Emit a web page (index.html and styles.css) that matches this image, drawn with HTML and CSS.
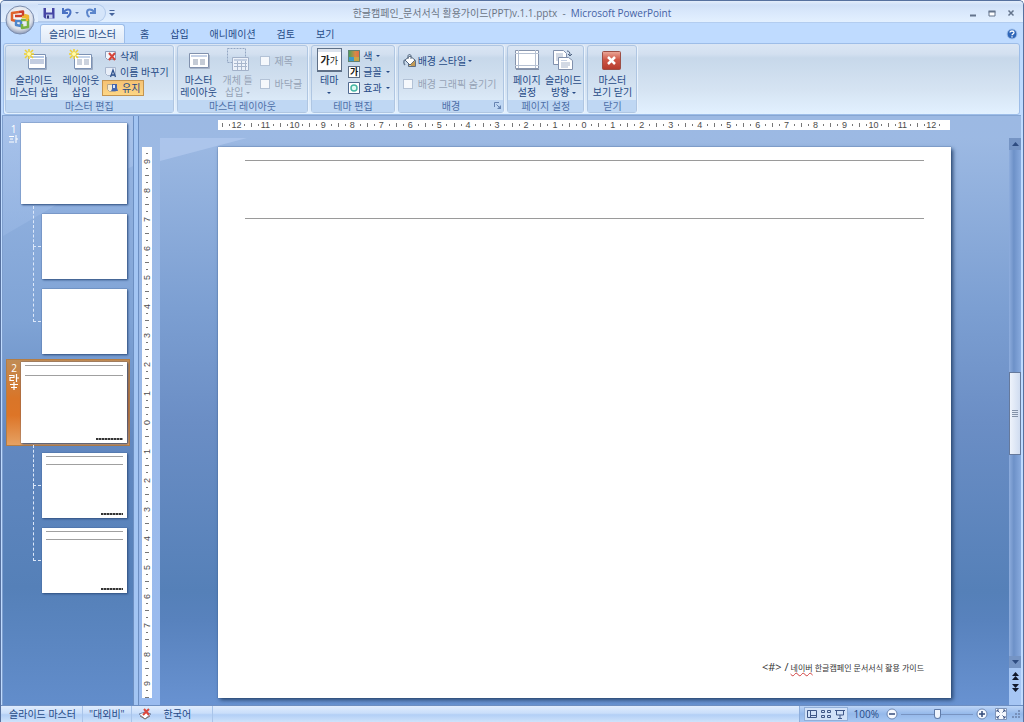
FILE: index.html
```html
<!DOCTYPE html>
<html lang="ko">
<head>
<meta charset="utf-8">
<title>한글캠페인_문서서식 활용가이드(PPT)v.1.1.pptx - Microsoft PowerPoint</title>
<link rel="stylesheet" href="styles.css">
</head>
<body>
<div class="window">
  <header class="titlebar">
    <div class="quick">
      <button aria-label="저장"><svg width="12" height="12" viewBox="0 0 12 12"><path d="M0.500 1h11v10.500H2L.5 10z" fill="#4545a5"/><path d="M3 1h6v4.500H3z" fill="#dfe8fa"/><path d="M3 7.500h6.500v4H3z" fill="#c2cfee"/><path d="M4 8.500h2v3H4z" fill="#333a80"/></svg></button>
      <button aria-label="실행 취소"><svg width="18" height="12" viewBox="0 0 18 12"><path d="M2 1v5h5M2.500 5.500C5 1.500 9.500 1.500 9.500 5c0 2.500-1.500 4-3.500 5.500" fill="none" stroke="#4a72c4" stroke-width="2"/><path d="M14 5h4l-2 2z" fill="#5a78b0"/></svg></button>
      <button aria-label="다시 실행"><svg width="12" height="12" viewBox="0 0 12 12"><path d="M10 1v5H5M9.500 5.500C7 1.500 2 1.500 2 5.500c0 2 1 3.500 2.500 4.500" fill="none" stroke="#5c86cc" stroke-width="2"/></svg></button>
    </div>
    <button class="quick-more" aria-label="빠른 실행 도구 모음 사용자 지정"><svg width="6" height="6" viewBox="0 0 6 6"><path d="M.5 0h5v1h-5zM0 3h6L3 6z" fill="#45649c"/></svg></button>
    <h1 class="title">한글캠페인_문서서식 활용가이드(PPT)v.1.1.pptx&nbsp; - &nbsp;<span>Microsoft PowerPoint</span></h1>
    <div class="controls">
      <button aria-label="최소화"><svg width="8" height="8" viewBox="0 0 8 8"><path d="M1 5.500h6v2H1z" fill="#64748c"/></svg></button>
      <button aria-label="최대화"><svg width="8" height="8" viewBox="0 0 8 8"><path d="M1 2.500h6v4.500H1z" fill="#fff" stroke="#64748c"/><path d="M.5 1.500h7v2h-7z" fill="#64748c"/></svg></button>
      <button aria-label="닫기"><svg width="8" height="8" viewBox="0 0 8 8"><path d="M1.500 1.500l5 5M6.500 1.500l-5 5" stroke="#64748c" stroke-width="1.500"/></svg></button>
    </div>
    <button class="orb" aria-label="Office 단추"><svg width="30" height="30" viewBox="0 0 30 30">
      <defs><radialGradient id="orb" cx=".5" cy=".4" r=".6"><stop offset="0" stop-color="#fff"/><stop offset=".7" stop-color="#dfe3ec"/><stop offset="1" stop-color="#8b98b4"/></radialGradient></defs>
      <circle cx="15" cy="15" r="14" fill="url(#orb)" stroke="#7b8dae"/>
      <g fill="none" stroke-width="2.500" stroke-linejoin="round"><path d="M14 7l-7 1v7l4 1" stroke="#e0622c"/><path d="M10 11h8V6.500l-4 .5" stroke="#cb3d2b"/><path d="M19 10l4 1v5" stroke="#e8b43a"/><path d="M11 16v4l5 1v-5z" stroke="#4f86cc"/><path d="M16 15h7v7l-6 1v-4" stroke="#79b341"/><path d="M17 12h5v4" stroke="#f0b72f"/></g></svg></button>
  </header>

  <nav class="tabs">
    <a class="tab tab-active" href="#master">슬라이드 마스터</a>
    <a class="tab" href="#home">홈</a>
    <a class="tab" href="#insert">삽입</a>
    <a class="tab" href="#animation">애니메이션</a>
    <a class="tab" href="#review">검토</a>
    <a class="tab" href="#view">보기</a>
    <button class="help" aria-label="도움말"><svg width="12" height="12" viewBox="0 0 12 12"><circle cx="6" cy="6" r="5" fill="#2f66b8" stroke="#a7c5ee"/><path d="M4 4.500C4 2.500 8 2.500 8 4.500 8 6 6 5.700 6 7.300M6 8.300v1.200" fill="none" stroke="#fff" stroke-width="1.300"/></svg></button>
  </nav>

  <section class="ribbon" id="master">
    <div class="group">
      <div class="group-body">
        <button class="big big-wide"><svg width="26" height="24" viewBox="0 0 26 24"><path d="M7.500 6.500h17v14h-17z" fill="#fff" stroke="#7c92b4"/><path d="M9 8h14v2H9z" fill="#b5c9e6"/><path d="M9 11h14v5H9z" fill="#c3cde0"/><path d="M8 21.500h17.500V9" fill="none" stroke="#9cabc2"/><path d="M8 1v10M3 6h10M4 2l8 8M12 2l-8 8" stroke="#f0d130" stroke-width="1.500"/><circle cx="8" cy="6" r="2" fill="#fffbb0"/></svg><span>슬라이드<br>마스터 삽입</span></button>
        <button class="big big-mid"><svg width="26" height="24" viewBox="0 0 26 24"><path d="M6.500 6.500h17v14h-17z" fill="#fff" stroke="#7c92b4"/><path d="M8 8h14v2H8z" fill="#c5d4ea"/><path d="M9 12h5M9 14h5M9 16h5M16 12h5M16 14h5M16 16h5" stroke="#98a5bb"/><path d="M7 21.500h17.500V9" fill="none" stroke="#9cabc2"/><path d="M6 1v10M1 6h10M2 2l8 8M10 2L2 10" stroke="#f0d130" stroke-width="1.500"/><circle cx="6" cy="6" r="2" fill="#fffbb0"/></svg><span>레이아웃<br>삽입</span></button>
        <div class="stack">
          <button class="small"><svg width="13" height="12" viewBox="0 0 13 12"><path d="M1.500 1.500h10v8h-8l-2-2z" fill="#f3f6fc" stroke="#8d9dba"/><path d="M5 3l6 7M11 3l-6 7" stroke="#d4453a" stroke-width="2"/></svg>삭제</button>
          <button class="small"><svg width="13" height="12" viewBox="0 0 13 12"><path d="M1.500 1.500h10v8h-8l-2-2z" fill="#e8eef8" stroke="#a8b7ce"/><path d="M6.500 11L9 4l2.500 7M7.500 9h3" fill="none" stroke="#31548f" stroke-width="1.300"/></svg>이름 바꾸기</button>
          <button class="small small-on"><svg width="13" height="12" viewBox="0 0 13 12"><path d="M1.500 2.500h8v7h-6l-2-2z" fill="#f6ead0" stroke="#b5a68c"/><path d="M6 2h5v4l1 3H5l1-2z" fill="#4667ad"/><path d="M7 3h2v3H7z" fill="#dae6fa"/></svg>유지</button>
        </div>
      </div>
      <div class="group-label">마스터 편집</div>
    </div>
    <div class="group">
      <div class="group-body">
        <button class="big big-mid"><svg width="24" height="24" viewBox="0 0 24 24"><path d="M2.500 5.500h19v14h-19z" fill="#fff" stroke="#8191ad"/><path d="M4 7h16v2H4z" fill="#c5d1e6"/><path d="M6 12h5M6 14h5M6 16h5M13 12h5M13 14h5M13 16h5" stroke="#8a97ac"/><path d="M3 20.500h19.500V7" fill="none" stroke="#a7b3c6"/></svg><span>마스터<br>레이아웃</span></button>
        <button class="big big-narrow" disabled><svg width="26" height="24" viewBox="0 0 26 24"><path d="M2.500.5h18v14h-18z" fill="none" stroke="#93a6c3" stroke-dasharray="2 1"/><path d="M7.500 9.500h16v13h-16z" fill="#edf2fa" stroke="#a2b1c9"/><path d="M9 11h13v2H9z" fill="#c3cfe2"/><path d="M9 15.500h13M9 18.500h13M12.500 13v9M16.500 13v9M20.500 13v9" stroke="#a9b7cd"/></svg><span>개체 틀<br>삽입 <i class="arrow"></i></span></button>
        <div class="stack stack-checks">
          <label class="check check-off"><input type="checkbox" disabled>제목</label>
          <label class="check check-off"><input type="checkbox" disabled>바닥글</label>
        </div>
      </div>
      <div class="group-label">마스터 레이아웃</div>
    </div>
    <div class="group">
      <div class="group-body">
        <button class="big big-theme"><span class="theme-icon"><b>가</b>가</span><span>테마<br><i class="arrow"></i></span></button>
        <div class="stack">
          <button class="small"><svg width="12" height="12" viewBox="0 0 12 12"><defs><linearGradient id="hue"><stop offset="0" stop-color="#36a35c"/><stop offset=".6" stop-color="#d98a45"/><stop offset="1" stop-color="#e4684a"/></linearGradient></defs><path d="M0 0h12v12H0z" fill="url(#hue)"/><path d="M1 7h5v4H1z" fill="#3d9cc8"/><path d="M6 7h5v4H6z" fill="#c9a548"/><path d="M.5.5h11v11H.5z" fill="none" stroke="#5f8273"/></svg>색 <i class="arrow"></i></button>
          <button class="small"><span class="font-icon">가</span>글꼴 <i class="arrow"></i></button>
          <button class="small"><svg width="12" height="12" viewBox="0 0 12 12"><path d="M.5.5h11v11H.5z" fill="#fff" stroke="#50698f"/><circle cx="6" cy="6" r="3" fill="#e2fbf5" stroke="#46b6a4" stroke-width="1.500"/></svg>효과 <i class="arrow"></i></button>
        </div>
      </div>
      <div class="group-label">테마 편집</div>
    </div>
    <div class="group">
      <div class="group-body">
        <div class="stack stack-checks stack-bg">
          <button class="small"><svg width="14" height="14" viewBox="0 0 14 14"><path d="M5.500 6.500h7v6h-7z" fill="#d9c58e" stroke="#5f6f87"/><path d="M2 6l5-4 5 4-5 5z" fill="#fff" stroke="#54677f"/><path d="M5 5V2c0-2 3-2 3 0v3" fill="none" stroke="#54677f"/><path d="M2 6c-2 1-1 4 0 5" fill="none" stroke="#6b7e95" stroke-width="1.500"/><path d="M8 10l4-3v5H8z" fill="#c39a54"/></svg>배경 스타일 <i class="arrow"></i></button>
          <label class="check check-off"><input type="checkbox" disabled>배경 그래픽 숨기기</label>
        </div>
      </div>
      <div class="group-label">배경<button class="launcher" aria-label="배경 서식"><svg width="7" height="7" viewBox="0 0 7 7"><path d="M.5 5V.5H5M2.500 2.500l3 3" fill="none" stroke="#6683b1"/><path d="M7 3v4H3z" fill="#6683b1"/></svg></button></div>
    </div>
    <div class="group">
      <div class="group-body">
        <button class="big big-slim"><svg width="24" height="24" viewBox="0 0 24 24"><path d="M.5 2.500h23v18H.5z" fill="#fff" stroke="#8694ac"/><path d="M3.500 2v18M20.500 2v18M0 5.500h24M0 17.500h24" stroke="#b6c1d2"/><path d="M1 21.500h23" stroke="#8491a7"/></svg><span>페이지<br>설정</span></button>
        <button class="big big-narrow"><svg width="24" height="24" viewBox="0 0 24 24"><path d="M2.500 2.500h10l3 3v11h-13z" fill="#fff" stroke="#8191ad"/><path d="M5 6h7M5 8h7M5 10h4M5 12h4" stroke="#a6b4ca"/><path d="M7.500 9.500h10l4 3v9h-14z" fill="#fff" stroke="#8191ad"/><path d="M10 12h6v1h-6z" fill="#c4d0e4"/><path d="M10 15h9M10 17h9M10 19h7" stroke="#a6b4ca"/><path d="M16 3c2 0 3 1 3 4M17 6l2 2 2-2" fill="none" stroke="#4d617f"/></svg><span>슬라이드<br>방향 <i class="arrow"></i></span></button>
      </div>
      <div class="group-label">페이지 설정</div>
    </div>
    <div class="group">
      <div class="group-body">
        <button class="big big-close"><svg width="22" height="24" viewBox="0 0 22 24"><defs><linearGradient id="red" x2="0" y2="1"><stop offset="0" stop-color="#eba99a"/><stop offset=".45" stop-color="#cf5747"/><stop offset="1" stop-color="#b43a2c"/></linearGradient></defs><rect x="1.500" y="3.500" width="18" height="18" rx="1" fill="url(#red)" stroke="#9c4f46"/><path d="M7 9l7 7M14 9l-7 7" stroke="#fff" stroke-width="2.500"/></svg><span>마스터<br>보기 닫기</span></button>
      </div>
      <div class="group-label">닫기</div>
    </div>
  </section>

  <main class="workspace">
    <aside class="outline">
      <div class="master"><span class="num">1<br><svg width="9" height="8" viewBox="0 0 9 8"><path d="M0 1.500h5M1 4h3M0 7h5M7 0v8M7 4h2" stroke="#fff" fill="none"/></svg></span><button class="thumb thumb-main" aria-label="슬라이드 마스터 1"></button></div>
      <ul class="layouts">
        <li><button class="thumb" aria-label="레이아웃 1"></button></li>
        <li><button class="thumb" aria-label="레이아웃 2"></button></li>
      </ul>
      <div class="master master-on"><span class="num">2<br><svg width="10" height="17" viewBox="0 0 10 17"><path d="M0 1.500h5v2H1v3h4M7.500 0v8M7.500 4H10M5 8v8M1 10.500h8M2 13.500h6" stroke="#fff" fill="none" stroke-width="1.200"/></svg></span><button class="thumb thumb-main thumb-lined" aria-label="슬라이드 마스터 2"><i></i></button></div>
      <ul class="layouts">
        <li><button class="thumb thumb-lined" aria-label="레이아웃 3"><i></i></button></li>
        <li><button class="thumb thumb-lined" aria-label="레이아웃 4"><i></i></button></li>
      </ul>
    </aside>
    <div class="splitter"></div>
    <section class="editor">
      <div class="hruler">
        <span>12</span><span>11</span><span>10</span><span>9</span><span>8</span><span>7</span><span>6</span><span>5</span><span>4</span><span>3</span><span>2</span><span>1</span><span>0</span><span>1</span><span>2</span><span>3</span><span>4</span><span>5</span><span>6</span><span>7</span><span>8</span><span>9</span><span>10</span><span>11</span><span>12</span>
      </div>
      <div class="vruler">
        <span>9</span><span>8</span><span>7</span><span>6</span><span>5</span><span>4</span><span>3</span><span>2</span><span>1</span><span>0</span><span>1</span><span>2</span><span>3</span><span>4</span><span>5</span><span>6</span><span>7</span><span>8</span><span>9</span>
      </div>
      <div class="stage">
        <article class="slide">
          <div class="slide-head"></div>
          <footer class="slide-foot"><b>&lt;#&gt; /</b> <u>네이버</u> 한글캠페인 문서서식 활용 가이드</footer>
        </article>
      </div>
      <div class="scroll">
        <button class="scroll-btn" aria-label="위로"><svg width="7" height="4" viewBox="0 0 7 4"><path d="M0 4h7L3.500 0z" fill="#2e4c80"/></svg></button>
        <div class="track"><div class="grip"><svg width="6" height="7" viewBox="0 0 6 7"><path d="M0 .5h6M0 2.500h6M0 4.500h6M0 6.500h6" stroke="#8492a8"/></svg></div></div>
        <button class="scroll-btn" aria-label="아래로"><svg width="7" height="4" viewBox="0 0 7 4"><path d="M0 0h7L3.500 4z" fill="#2e4c80"/></svg></button>
        <div class="pager">
          <button aria-label="이전 슬라이드"><svg width="7" height="8" viewBox="0 0 7 8"><path d="M0 4h7L3.500 0zM0 8h7L3.500 4z" fill="#10182c"/></svg></button>
          <button aria-label="다음 슬라이드"><svg width="7" height="8" viewBox="0 0 7 8"><path d="M0 0h7L3.500 4zM0 4h7L3.500 8z" fill="#10182c"/></svg></button>
        </div>
      </div>
    </section>
  </main>

  <footer class="status">
    <span class="cell">슬라이드 마스터</span>
    <span class="cell">"대외비"</span>
    <span class="cell cell-lang"><svg width="14" height="12" viewBox="0 0 14 12"><path d="M1 6l6-2 6 2-6 5z" fill="#fff" stroke="#7588a8"/><path d="M2 8l5 3 5-3" fill="none" stroke="#8c7466"/><path d="M6 1l5 6M11 1L5 7" stroke="#da473c" stroke-width="2"/></svg>한국어</span>
    <div class="tools">
      <div class="views">
        <button aria-label="기본"><svg width="12" height="10" viewBox="0 0 12 10"><path d="M1.500 1.500h9v7h-9zM4.500 1v8M5 6.500h6" fill="none" stroke="#3f5787"/></svg></button>
        <button aria-label="여러 슬라이드"><svg width="12" height="10" viewBox="0 0 12 10"><path d="M1.500 1.500h3v2h-3zM7.500 1.500h3v2h-3zM1.500 6.500h3v2h-3zM7.500 6.500h3v2h-3z" fill="none" stroke="#3f5787"/></svg></button>
        <button aria-label="슬라이드 쇼"><svg width="12" height="10" viewBox="0 0 12 10"><path d="M1 1.500h10M2.500 2v4h7V2M6 6v3M4 9.500h4" fill="none" stroke="#3f5787"/></svg></button>
      </div>
      <span class="percent">100%</span>
      <button aria-label="축소"><svg width="12" height="12" viewBox="0 0 12 12"><circle cx="6" cy="6" r="5" fill="#f5f9ff" stroke="#6d87b3"/><path d="M3 6h6" stroke="#344c7c" stroke-width="1.500"/></svg></button>
      <input class="zoom" type="range" min="0" max="100" value="50" aria-label="확대/축소">
      <button aria-label="확대"><svg width="12" height="12" viewBox="0 0 12 12"><circle cx="6" cy="6" r="5" fill="#f5f9ff" stroke="#6d87b3"/><path d="M3 6h6M6 3v6" stroke="#344c7c" stroke-width="1.500"/></svg></button>
      <button class="fit" aria-label="창에 맞춤"><svg width="12" height="12" viewBox="0 0 12 12"><path d="M.5.5h11v11H.5z" fill="#f4f8fe" stroke="#7d93b8"/><path d="M2 2l2.500 2.500M10 2L7.500 4.500M2 10l2.500-2.500M10 10L7.500 7.500M2 4V2h2M8 2h2v2M2 8v2h2M10 8v2H8" fill="none" stroke="#3f5787"/></svg></button>
      <svg width="10" height="10" viewBox="0 0 10 10"><path d="M7 1h2v2H7zM7 4h2v2H7zM4 4h2v2H4zM7 7h2v2H7zM4 7h2v2H4zM1 7h2v2H1z" fill="#7891bb"/></svg>
    </div>
  </footer>
</div>
</body>
</html>
```

FILE: styles.css
```css
* { box-sizing: border-box; }

body {
  margin: 0;
  font: 10px/12px "Open Sans", "Noto Sans CJK KR", sans-serif;
  color: #264a86;
}

button {
  display: flex;
  align-items: center;
  justify-content: center;
  padding: 0;
  border: 0;
  background: none;
  font: inherit;
  color: inherit;
}

svg { display: block; flex: none; }
b, i { font-style: normal; }

.window {
  display: flex;
  flex-direction: column;
  height: 100vh;
  min-height: 600px;
  background: #bfdbff;
  border: solid #56719f;
  border-width: 1px 1px 0;
  border-radius: 5px 5px 0 0;
  overflow: hidden;
}

/* Title bar */
.titlebar {
  position: relative;
  display: flex;
  align-items: center;
  height: 22px;
  padding: 2px 6px 0 37px;
  background: linear-gradient(#e3edfb 0, #cfe0f8 4px, #d8e7fb 10px, #e3f0ff 100%);
  border-bottom: 1px solid #b3cdf0;
}

.quick {
  display: flex;
  align-items: center;
  gap: 6px;
  height: 18px;
  padding: 0 8px 0 5px;
  border: 1px solid #b2caeb;
  border-left: 0;
  border-radius: 0 9px 9px 0;
  background: #d5e5fa;
}
.quick-more { margin-left: 3px; }

.title {
  flex: 1;
  margin: 0 0 0 -58px;
  font-size: 10px;
  font-weight: 400;
  text-align: center;
  color: #6a7484;
  white-space: nowrap;
}
.title span { color: #4562a5; }

.controls { display: flex; gap: 11px; padding: 2px; }

.orb {
  position: absolute;
  left: 4px;
  top: 4px;
  z-index: 2;
}

/* Tabs */
.tabs {
  display: flex;
  align-items: flex-end;
  gap: 9px;
  height: 20px;
  padding: 0 5px 0 39px;
}
.tab {
  height: 18px;
  padding: 2px 6px 0;
  line-height: 14px;
  color: #264a86;
  text-decoration: none;
  white-space: nowrap;
}
.tab-active {
  height: 19px;
  padding: 2px 8px 0;
  border: 1px solid #9dbde8;
  border-bottom: 0;
  border-radius: 3px 3px 0 0;
  background: linear-gradient(#f2f8ff, #dfe9f6);
}
.help { margin: 0 0 3px auto; }

/* Ribbon */
.ribbon {
  display: flex;
  gap: 3px;
  margin: 0 3px 0 2px;
  padding: 1px;
  border: 1px solid #9dbde8;
  border-radius: 3px;
  background: linear-gradient(#dbe6f4 0, #d3e0f0 10px, #c7d8ea 14px, #d5e3f2 45px, #e2f1ff 100%);
}
.group {
  border: 1px solid #afc6e2;
  border-radius: 3px;
  box-shadow: 1px 0 0 #eaf3fd;
}
.group-body {
  display: flex;
  height: 54px;
  padding: 2px 1px 0;
}
.group-label {
  position: relative;
  height: 12px;
  line-height: 12px;
  text-align: center;
  color: #4d6fa8;
  background: #bfd7f3;
}
.launcher { position: absolute; right: 2px; top: 2px; }

.big {
  flex-direction: column;
  justify-content: flex-start;
  gap: 2px;
  white-space: nowrap;
}
.big:disabled { color: #96a3b6; }
.big-wide { width: 54px; }
.big-mid { width: 40px; }
.big-narrow { width: 38px; }
.big-slim { width: 35px; }
.big-theme { width: 32px; }
.big-close { width: 46px; }

.stack { display: flex; flex-direction: column; padding: 0 1px; }
.stack-checks { padding: 6px 4px 0 3px; gap: 9px; }
.stack-bg { padding: 6px 6px 0 3px; }
.small {
  justify-content: flex-start;
  gap: 3px;
  height: 16px;
  padding: 0 2px;
  white-space: nowrap;
}
.stack-bg .small { height: 14px; padding: 0; gap: 1px; }
.small-on {
  align-self: flex-start;
  padding: 0 3px;
  border: 1px solid #c39450;
  background: linear-gradient(#f6c273, #fdd685);
}

.arrow {
  display: inline-block;
  border: 2px solid transparent;
  border-top-color: currentColor;
  border-bottom: 0;
  vertical-align: middle;
}
.small .arrow { margin-left: 1px; }

.check { display: flex; align-items: center; gap: 5px; height: 14px; white-space: nowrap; }
.check input {
  appearance: none;
  width: 10px;
  height: 10px;
  margin: 0;
  border: 1px solid #b3c2d6;
  background: #f5f8fc;
}
.check-off { color: #96a3b6; }

.theme-icon {
  width: 25px;
  height: 24px;
  padding-top: 5px;
  border: 1px solid #5f7087;
  border-bottom-width: 2px;
  background: linear-gradient(#dde4ee 3px, #fff 3px);
  font-size: 9px;
  color: #222;
}
.theme-icon b { font-size: 10px; }
.font-icon {
  width: 12px;
  height: 12px;
  border: 1px solid #5f7087;
  background: #fff;
  font-size: 9px;
  font-weight: 700;
  line-height: 10px;
  color: #111;
}

/* Workspace */
.workspace {
  display: flex;
  flex: 1;
  min-height: 0;
  margin: 0 2px 0 1px;
  border-top: 1px solid #86a6d3;
}

.outline {
  position: relative;
  width: 131px;
  padding: 4px 3px;
  background: linear-gradient(#9ab8e4 0, #7fa3d5 35%, #6288c0 55%, #5580b8 80%, #628dcb 100%);
  border-left: 1px solid #7f9fce;
}
.outline::before {
  content: "";
  position: absolute;
  inset: 0 0 auto 0;
  height: 120px;
  background: linear-gradient(#b3cbf0, #98b7e4);
  opacity: 0.6;
  clip-path: polygon(0 0, 100% 0, 100% 50px, 60px 85px, 0 100%);
}
.master {
  position: relative;
  display: flex;
  padding: 3px 3px 3px 0;
}
.master-on {
  margin-top: 5px;
  padding: 2px 2px 2px 0;
  border: 1px solid #b47d44;
  background: linear-gradient(#c08c55, #d97528 45%, #dd7527 65%, #e5a163);
}
.master-on .num { width: 14px; }
.num {
  width: 15px;
  text-align: center;
  color: #fff;
}
.num svg { margin: 0 auto; }
.thumb {
  flex: 1;
  width: 100%;
  aspect-ratio: 85 / 65;
  background: #fff;
  box-shadow: 1px 1px 2px #2f4f80, 0 0 1px #3c5a88;
}
.thumb-main { aspect-ratio: 106 / 81; }
.thumb-lined {
  flex-direction: column;
  align-items: stretch;
  justify-content: space-between;
  padding: 3px 4px;
}
.thumb-lined::before {
  content: "";
  height: 12%;
  border: solid #a0a0a0;
  border-width: 1px 0;
}
.thumb-lined i {
  align-self: flex-end;
  width: 28%;
  height: 2px;
  background: repeating-linear-gradient(90deg, #333 0 2px, #999 2px 3px);
}

.layouts {
  position: relative;
  display: flex;
  flex-direction: column;
  gap: 10px;
  margin: 0;
  padding: 7px 3px 0 36px;
  list-style: none;
}
.layouts li { position: relative; }
.layouts li::before {
  content: "";
  position: absolute;
  left: -9px;
  width: 7px;
  top: -8px;
  bottom: 50%;
  border: dashed #dce8fa;
  border-width: 0 0 1px 1px;
}
.layouts li + li::before { top: -42px; }

.splitter {
  width: 6px;
  background: #a3c5f3;
  border: solid #6c8fc2;
  border-width: 0 1px;
}

/* Editor */
.editor {
  display: grid;
  flex: 1;
  grid-template-columns: 10px 1fr 12px;
  grid-template-rows: 10px 1fr;
  column-gap: 8px;
  row-gap: 8px;
  padding: 4px 0 0 3px;
  background: linear-gradient(#9cb9e3, #9abbef);
}
.hruler, .vruler {
  display: flex;
  background: #fff;
  font-family: "Liberation Sans", sans-serif;
  font-size: 9px;
  line-height: 10px;
  color: #4c4c4c;
}
.hruler {
  grid-column: 2;
  margin: 0 51px 0 58px;
  padding: 0 4px;
}
.vruler {
  grid-column: 1;
  flex-direction: column;
  margin: 9px 0 7px;
}
.hruler span, .vruler span {
  --dot: linear-gradient(#777, #777);
  display: flex;
  flex: 1;
  align-items: center;
  justify-content: center;
  background: var(--dot), var(--dot), var(--dot);
  background-repeat: no-repeat;
}
.hruler span {
  background-size: 1px 4px, 1px 2px, 1px 2px;
  background-position: 0 50%, 25% 50%, 78% 50%;
}
.vruler span {
  writing-mode: vertical-rl;
  transform: rotate(180deg);
  background-size: 4px 1px, 2px 1px, 2px 1px;
  background-position: 50% 0, 50% 25%, 50% 78%;
}

.stage {
  position: relative;
  grid-column: 2;
  display: flex;
  margin-right: -8px;
  padding: 9px 58px 7px;
  background: linear-gradient(#9cb9e3 0, #7c9fd2 30%, #6b8ec5 50%, #5580b8 80%, #5882bd 85%, #6892d1 100%);
}
.stage::before {
  content: "";
  position: absolute;
  left: 0;
  top: 0;
  width: 87px;
  height: 23px;
  background: #b3cbf0;
  opacity: 0.7;
  clip-path: polygon(0 0, 100% 0, 0 100%);
}
.slide {
  position: relative;
  display: flex;
  flex: 1;
  flex-direction: column;
  justify-content: space-between;
  padding: 13px 27px 24px;
  background: #fff;
  box-shadow: 2px 2px 4px #28466f, 0 0 1px #3c5a88;
}
.slide-head {
  height: 59px;
  border: solid #9a9a9a;
  border-width: 1px 0;
}
.slide-foot {
  font-size: 8px;
  text-align: right;
  color: #333;
}
.slide-foot b { font-size: 11px; font-weight: 400; }
.slide-foot u { text-decoration: underline wavy #d04040 1px; }

/* Scroll bar */
.scroll {
  grid-column: 3;
  display: flex;
  flex-direction: column;
  background: #7594c4;
}
.scroll-btn { height: 12px; }
.track {
  flex: 1;
  padding-top: 222px;
  background: linear-gradient(90deg, #8eaddd, #6d91c8 40%, #88aade);
}
.grip {
  display: flex;
  align-items: center;
  justify-content: center;
  height: 83px;
  border: 1px solid #65799c;
  background: linear-gradient(90deg, #eef3fb, #d0dcf0);
}
.pager {
  display: flex;
  flex-direction: column;
  gap: 4px;
  height: 37px;
  padding-top: 4px;
  background: #a6c6f4;
}

/* Status bar */
.status {
  display: flex;
  align-items: stretch;
  height: 17px;
  border-top: 1px solid #6e8fc2;
  background: linear-gradient(#e0ecfd, #c9defa 45%, #b2cff6 55%, #cee2fb);
  line-height: 14px;
  white-space: nowrap;
}
.cell {
  display: flex;
  align-items: center;
  padding: 0 6px;
  border-right: 1px solid #a9c4e9;
}
.cell:first-child { padding-left: 8px; }
.cell-lang { gap: 12px; padding-right: 21px; }
.tools {
  display: flex;
  align-items: center;
  gap: 3px;
  margin-left: auto;
  padding: 0 2px 0 4px;
  border-left: 1px solid #8eaedb;
  background: linear-gradient(#bdd5f6, #94b8ea 50%, #a8c8f3);
}
.views {
  display: flex;
  gap: 2px;
  padding: 1px;
  border: 1px solid #91afd9;
  background: #d2e2f8;
}
.percent { margin: 0 4px 0 3px; }
.zoom {
  appearance: none;
  width: 72px;
  height: 12px;
  margin: 0;
  background: linear-gradient(#7894c2, #7894c2) center / 100% 1px no-repeat;
}
.zoom::-webkit-slider-thumb {
  appearance: none;
  width: 7px;
  height: 10px;
  border: 1px solid #5e7aa8;
  border-radius: 1px 1px 4px 4px;
  background: #eef4fd;
}
.fit { margin: 0 1px 0 4px; }
```
